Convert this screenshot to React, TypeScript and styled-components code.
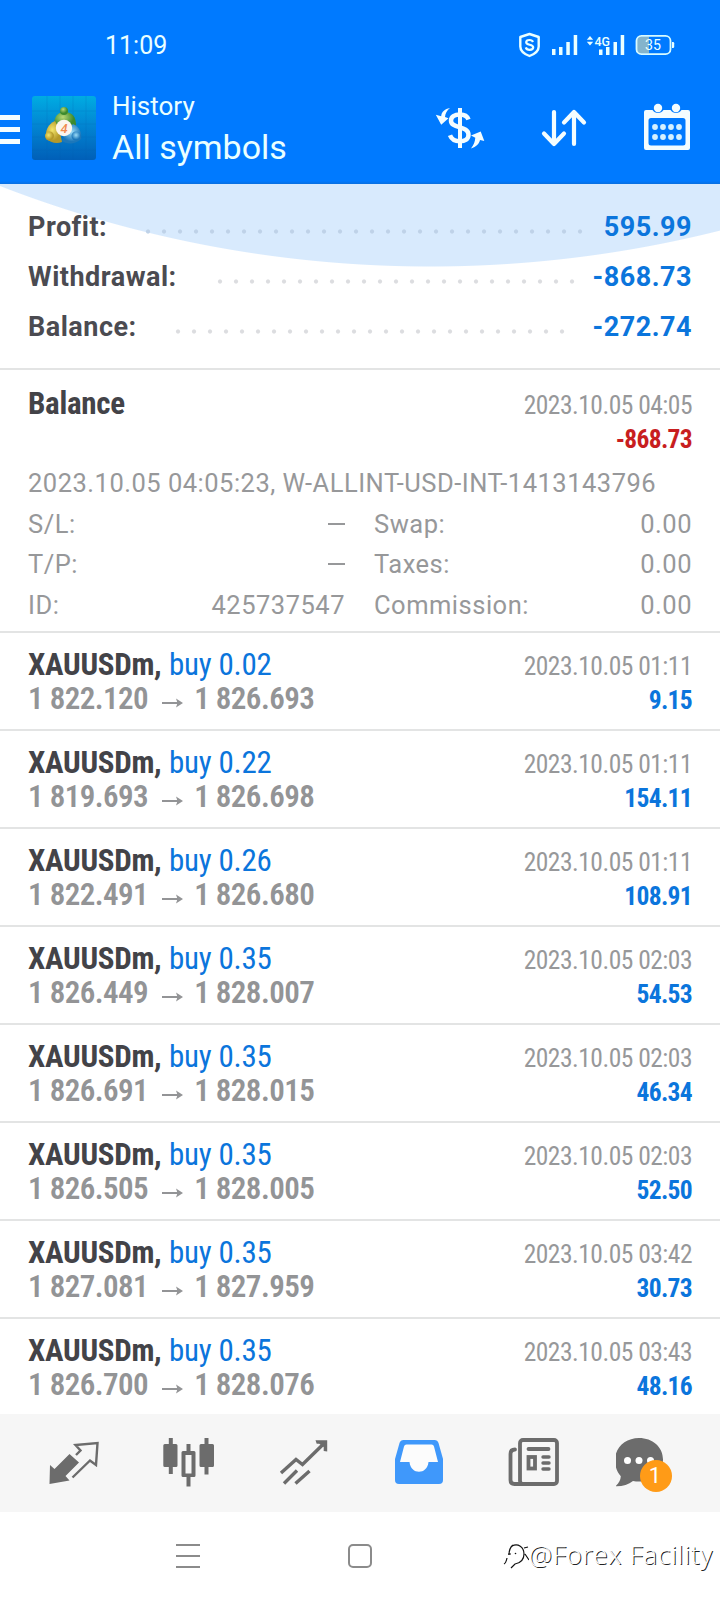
import React from "react";
import styled, { createGlobalStyle } from "styled-components";

const Global = createGlobalStyle`
  * { box-sizing: border-box; }
  body { margin: 0; background: #fff; font-family: Roboto, "Liberation Sans", sans-serif; }
  svg { display: block; flex: none; }
`;

const Screen = styled.div`
  width: 720px;
  height: 1600px;
  display: flex;
  flex-direction: column;
  overflow: hidden;
  background: #fff;
`;

const Header = styled.header`
  height: 184px;
  flex: none;
  background: linear-gradient(#007aff 0 181px, #0a6fe0 184px);
  color: #eaffff;
`;

const StatusBar = styled.div`
  height: 90px;
  display: flex;
  justify-content: space-between;
  padding: 30px 42px 0 105px;
`;

const Clock = styled.div`
  font-size: 25px;
  line-height: 32px;
`;

const TitleBar = styled.div`
  height: 90px;
  display: flex;
`;

const MenuBars = styled.div`
  width: 20px;
  height: 29px;
  margin-top: 25px;
  display: flex;
  flex-direction: column;
  justify-content: space-between;
`;

const Bar = styled.i`
  height: 5px;
  background: #f4fdff;
`;

const Logo = styled.div`
  margin: 6px 16px 0 12px;
`;

const Titles = styled.div`
  width: 300px;
`;

const Subtitle = styled.div`
  font-size: 26px;
  line-height: 30px;
  margin-top: 1px;
`;

const Title = styled.div`
  font-size: 34px;
  line-height: 40px;
  margin-top: 6px;
`;

const Actions = styled.div`
  flex: 1;
  display: flex;
  justify-content: space-between;
  padding: 12px 27px 0 22px;
`;

const Summary = styled.section`
  height: 186px;
  flex: none;
  padding: 18px 28px 0;
  border-bottom: 2px solid #e3e4e4;
  background: radial-gradient(circle at 430px -1106.5px, #d8eafd 1188.5px, #fff 1189.5px);
`;

const SummaryRow = styled.div`
  height: 50px;
  display: flex;
  align-items: center;
  font-size: 27px;
  font-weight: 700;
  letter-spacing: 0.5px;
  color: #4b4b51;
`;

const Dots = styled.span<{ $left: number; $count: number; $tint?: boolean }>`
  width: ${(p) => p.$count * 16}px;
  height: 5px;
  margin-top: 8px;
  margin-left: ${(p) => p.$left}px;
  background: radial-gradient(circle at 8px 2.5px, ${(p) => (p.$tint ? "#bfd2e8" : "#dcdde0")} 1.6px, transparent 2.6px) 0 0 / 16px 5px repeat-x;
`;

const SummaryLabel = styled.span<{ $w: number }>`
  width: ${(p) => p.$w}px;
  flex: none;
  white-space: nowrap;
`;

const SummaryValue = styled.span`
  margin-left: auto;
  color: #0b75dc;
`;

const condensed = `
  font-family: "Roboto Condensed", Roboto, sans-serif;
  font-stretch: 75%;
  white-space: nowrap;
`;

const Deal = styled.article<{ $last?: boolean }>`
  height: ${(p) => (p.$last ? 95 : 98)}px;
  flex: none;
  display: flex;
  justify-content: space-between;
  padding: 15px 28px 0;
  border-bottom: ${(p) => (p.$last ? 0 : 2)}px solid #e3e4e4;
`;

const DealLine = styled.div`
  ${condensed}
  height: 34px;
  line-height: 34px;
  font-size: 31px;
  letter-spacing: -0.2px;
  color: #0b75dc;
  display: flex;
`;

const Name = styled.b`
  font-weight: 700;
  letter-spacing: -0.3px;
  color: #434348;
  margin-right: 7.5px;
`;

const Prices = styled(DealLine)`
  font-weight: 600;
  letter-spacing: -0.55px;
  color: #939496;
  align-items: center;
`;

const Arrow = styled.svg`
  margin: 8px 11.5px 0 13.5px;
`;

const Right = styled.div`
  padding-top: 1px;
  text-align: right;
`;

const Stamp = styled.div`
  ${condensed}
  height: 34px;
  line-height: 34px;
  font-size: 25.5px;
  letter-spacing: -0.5px;
  color: #97989a;
`;

const Amount = styled(Stamp)<{ $loss?: boolean }>`
  font-weight: 700;
  letter-spacing: -0.7px;
  color: ${(p) => (p.$loss ? "#c81e1f" : "#0b75dc")};
`;

const Operation = styled.article`
  height: 263px;
  flex: none;
  padding: 17px 28px 0;
  border-bottom: 2px solid #e3e4e4;
`;

const OperationHead = styled.div`
  display: flex;
  justify-content: space-between;
  height: 75px;
`;

const Comment = styled.div`
  font-size: 25.5px;
  line-height: 42px;
  height: 42px;
  letter-spacing: 0.5px;
  color: #97989a;
  white-space: nowrap;
`;

const Details = styled.div`
  display: grid;
  grid-template-columns: 317px 318px;
  column-gap: 29px;
  grid-auto-rows: 40.4px;
`;

const Detail = styled.div`
  display: flex;
  justify-content: space-between;
  font-size: 25.5px;
  line-height: 40px;
  letter-spacing: 0.5px;
  color: #97989a;
`;

const Dash = styled.i`
  width: 17px;
  height: 2px;
  margin-top: 19px;
  background: #97989a;
`;

const Tabs = styled.nav`
  height: 98px;
  flex: none;
  display: grid;
  grid-template-columns: repeat(6, 115px);
  place-items: center;
  padding-left: 16px;
  background: #f6f6f6;
`;

const SystemBar = styled.footer`
  height: 88px;
  display: flex;
  align-items: center;
  padding: 0 7px 0 176px;
`;

const Home = styled.i`
  width: 24px;
  height: 24px;
  margin-left: 148px;
  border: 2px solid #8b8b8b;
  border-radius: 5px;
`;

const Watermark = styled.div`
  display: flex;
  margin: -4px 0 0 auto;
  align-items: center;
  font: 300 26px/30px "Open Sans", "Noto Sans", sans-serif;
  letter-spacing: 0.75px;
  color: #fff;
  text-shadow: 1px 0.5px 0 #222;
  white-space: nowrap;
`;

const deals = [
  ["0.02", "1 822.120", "1 826.693", "01:11", "9.15"],
  ["0.22", "1 819.693", "1 826.698", "01:11", "154.11"],
  ["0.26", "1 822.491", "1 826.680", "01:11", "108.91"],
  ["0.35", "1 826.449", "1 828.007", "02:03", "54.53"],
  ["0.35", "1 826.691", "1 828.015", "02:03", "46.34"],
  ["0.35", "1 826.505", "1 828.005", "02:03", "52.50"],
  ["0.35", "1 827.081", "1 827.959", "03:42", "30.73"],
  ["0.35", "1 826.700", "1 828.076", "03:43", "48.16"],
];

const StatusIcons = () => (
  <svg width="160" height="30" viewBox="518 30 160 30" fill="#eaffff">
    <path d="M529.500 34l9.200 3v9.500c0 4.500-4 7.500-9.200 9.500-5.200-2-9.200-5-9.200-9.500V37z" fill="none" stroke="#eaffff" strokeWidth="2.400" strokeLinejoin="round" />
    <path d="M533 42c-.6-1.600-2-2-3.500-2-2 0-3.300.8-3.300 2.300 0 3.400 7 1.600 7 5 0 1.600-1.600 2.500-3.600 2.500-1.900 0-3.300-.7-3.800-2.400" fill="none" stroke="#eaffff" strokeWidth="2.200" />
    <path d="M552 49h3.500v6H552zM559 47h3.500v8H559zM566.300 42h3.500v13h-3.500zM573.700 35h3.500v20h-3.500z" />
    <path d="M599 49.500h3.500V55H599zM606 47h3.500v8H606zM613.500 42h3.500v13h-3.500zM620.700 35h3.500v20h-3.500z" />
    <path d="M590 36l3.200 3.700h-6.400zM590 45.500l3.200-3.700h-6.400z" />
    <text x="594.500" y="45.500" fontSize="12.500" fontWeight="500" textLength="15.500" lengthAdjust="spacingAndGlyphs">4G</text>
    <path d="M641 36.500h8v17h-8a4 4 0 0 1-4-4v-9a4 4 0 0 1 4-4z" fill="#84b4cc" />
    <rect x="636.500" y="35.800" width="34" height="18.400" rx="5" fill="none" stroke="#d8fbff" strokeWidth="1.800" />
    <path d="M672 42h1a1.200 1.200 0 0 1 1.200 1.200v3.600A1.200 1.200 0 0 1 673 48h-1z" />
    <text x="645" y="50" fontSize="14.500" textLength="16" lengthAdjust="spacingAndGlyphs">35</text>
  </svg>
);

const AppLogo = () => (
  <svg width="64" height="64" viewBox="0 0 64 64">
    <defs>
      <linearGradient id="sky" x1="0" y1="0" x2="0" y2="1">
        <stop offset="0" stopColor="#00ace2" />
        <stop offset="0.450" stopColor="#0286d2" />
        <stop offset="1" stopColor="#005fb8" />
      </linearGradient>
      <radialGradient id="green" cx=".4" cy=".3"><stop offset="0" stopColor="#b9d977" /><stop offset="1" stopColor="#3c8a2d" /></radialGradient>
      <radialGradient id="gold" cx=".4" cy=".4"><stop offset="0" stopColor="#f3e56b" /><stop offset="1" stopColor="#b4992a" /></radialGradient>
      <radialGradient id="blue" cx=".5" cy=".4"><stop offset="0" stopColor="#9bdcf8" /><stop offset="1" stopColor="#1c77ba" /></radialGradient>
    </defs>
    <rect width="64" height="64" rx="3" fill="url(#sky)" />
    <path d="M0 15h64M0 28h64M0 41h64M0 54h64M15 0v64M28 0v64M41 0v64M54 0v64" stroke="#0a5fae" strokeWidth=".6" opacity=".3" />
    <path d="M22 29c0-9 4-13 11-13s11 5 11 13l-3 4H24z" fill="url(#green)" />
    <circle cx="32" cy="15" r="4" fill="url(#green)" />
    <path d="M23 25c-7 3-10 10-9 17 4 5 11 6 16 4l-3-14z" fill="url(#gold)" />
    <circle cx="17.500" cy="40" r="4.500" fill="url(#gold)" />
    <path d="M41 28c7 3 9 9 8 15-5 5-13 6-19 2l5-10z" fill="url(#blue)" />
    <circle cx="44" cy="40" r="4.500" fill="url(#blue)" />
    <circle cx="32" cy="32" r="8.200" fill="#fbf6ee" />
    <text x="32" y="36.800" fontSize="13" fontWeight="500" fontStyle="italic" textAnchor="middle" fill="#f08a50">4</text>
  </svg>
);

const Currency = () => (
  <svg width="52" height="52" viewBox="434 102 52 52" fill="none" stroke="#f4fdff" strokeWidth="4">
    <path d="M460 108v40" />
    <path d="M468.500 119.500c-1.200-3.300-4-5-8.500-5-5.500 0-9 2.300-9 6.200 0 8.300 17.500 4.500 17.500 14 0 4.300-3.600 6.600-8.500 6.600-5.300 0-8.600-2.300-10-6" strokeWidth="4.500" />
    <path d="M450 108c-5.500 1-8.500 4-8.800 8.200l-5.400-1.400 5.400 10 7.300-6.500-3.500-1.200c.3-3.600 1.700-6.400 5-9.100zM471 148.500c5.500-2 8-4.600 9-8.500l4.300 1-3.600-9.500-9.700 4 4.300 2.300c-.3 4-1.500 7-4.300 10.700z" fill="#f4fdff" stroke="none" />
  </svg>
);

const Sort = () => (
  <svg width="52" height="52" viewBox="538 102 52 52" fill="none" stroke="#f4fdff" strokeWidth="4.200" strokeLinecap="round" strokeLinejoin="round">
    <path d="M554 112v32M544 133.500l10 10.500 10-10.500M574 144v-32M564 122.500l10-10.500 10 10.500" />
  </svg>
);

const CalendarIcon = () => (
  <svg width="52" height="52" viewBox="641 102 52 52" fill="#f4fdff">
    <path fillRule="evenodd" d="M646 110h6.500a6.500 6.500 0 0 0 11 0h7a6.500 6.500 0 0 0 11 0h6.500a2 2 0 0 1 2 2v36a2 2 0 0 1-2 2h-42a2 2 0 0 1-2-2v-36a2 2 0 0 1 2-2zM651 118a2.500 2.500 0 0 0-2.500 2.500v22.500a2.500 2.500 0 0 0 2.500 2.500h32a2.500 2.500 0 0 0 2.500-2.500v-22.500a2.500 2.500 0 0 0-2.500-2.500z" />
    <circle cx="658" cy="108" r="4.200" />
    <circle cx="676" cy="108" r="4.200" />
    {[127, 137].map((y) => [655, 663, 671, 679].map((x) => <circle key={`${x}${y}`} cx={x} cy={y} r="2.900" fill="#d5f1ff" />))}
  </svg>
);

const TradeIcon = () => (
  <svg width="60" height="60" viewBox="43.500 1433 60 60" fill="#6c6c6c">
    <path d="M69 1454l9.500 8.500-13.500 13.500 4 4.500-20 3.500.500-19 4.500 4z" />
    <path d="M75.500 1455l4.500-4.500-5-5.500 22-2-1.500 22-6-4.500-17.500 17" fill="none" stroke="#6c6c6c" strokeWidth="2.400" />
  </svg>
);

const CandlesIcon = () => (
  <svg width="60" height="60" viewBox="159 1433 60 60" fill="#6c6c6c">
    <path d="M168.800 1438h4v6h3.200a1.500 1.500 0 0 1 1.500 1.500v20a1.500 1.500 0 0 1-1.500 1.500h-3.200v7h-4v-7h-4a1.500 1.500 0 0 1-1.500-1.500v-20a1.500 1.500 0 0 1 1.500-1.500h4zM204.500 1438h4v6h4a1.500 1.500 0 0 1 1.500 1.500v20a1.500 1.500 0 0 1-1.500 1.500h-4v7.500h-4v-7.500h-3.500a1.500 1.500 0 0 1-1.500-1.500v-20a1.500 1.500 0 0 1 1.500-1.500h3.500z" />
    <path fillRule="evenodd" d="M186.500 1444h4v7h3.500a1.500 1.500 0 0 1 1.500 1.500v23a1.500 1.500 0 0 1-1.500 1.500h-3.500v9.500h-4v-9.500H183a1.500 1.500 0 0 1-1.500-1.500v-23a1.500 1.500 0 0 1 1.500-1.500h3.500zm-1 11v18.500h6V1455z" />
  </svg>
);

const TrendIcon = () => (
  <svg width="60" height="60" viewBox="273.500 1433 60 60" fill="none" stroke="#6c6c6c" strokeWidth="3.400">
    <path d="M280.500 1473l15-13.500 6.500 5 22-21.500M283.500 1483.500l13-13M295 1483.500l14-12.500" />
    <path d="M315 1440.300h11.700v11.200l-3.500-.5v-4l-4.500-3.200h-2.500z" fill="#6c6c6c" stroke="none" />
  </svg>
);

const InboxIcon = () => (
  <svg width="60" height="60" viewBox="388.500 1433 60 60">
    <path d="M403 1440h31q3 0 4 3l4.500 16v21q0 4-4 4h-40q-4 0-4-4v-21l4.500-16q1-3 4-3z" fill="#3f98fb" />
    <path d="M406 1444.500q-2 0-2.500 2l-4 15.500h9.500c1.200 13 17.800 13 19 0h9.500l-4-15.500q-.5-2-2.500-2z" fill="#fcfcfc" />
  </svg>
);

const NewsIcon = () => (
  <svg width="60" height="60" viewBox="504 1433 60 60" fill="none" stroke="#6c6c6c" strokeWidth="3.800">
    <rect x="520" y="1440" width="37" height="44" rx="3" />
    <path d="M515 1449.500q-4.500 0-4.500 4.500v26q0 4 4 4h8M528.500 1449h20" strokeLinecap="round" />
    <rect x="528.500" y="1457" width="6.500" height="11.500" />
    <path d="M543 1457h6M543 1463h6M543 1469h6" strokeWidth="3.400" strokeLinecap="round" />
  </svg>
);

const ChatIcon = () => (
  <svg width="66" height="60" viewBox="616 1433 66 60">
    <path d="M639 1438c13.500 0 24 9 24 21.500s-10.500 22-24 22c-2 0-4-.2-6-.6-4.500 3.600-10.500 5.600-17.500 5.400 3.500-3.300 5-6 5.300-10-3.700-4-5.800-9.500-5.800-16.300 0-12.500 10.500-22 24-22z" fill="#6c6c6c" />
    <circle cx="627.500" cy="1460.500" r="3.500" fill="#fff" />
    <circle cx="639" cy="1460.500" r="3.500" fill="#fff" />
    <circle cx="650.500" cy="1460.500" r="3.500" fill="#fff" />
    <circle cx="656" cy="1476" r="16" fill="#ff9b17" />
    <text x="655" y="1483" fontSize="22" textAnchor="middle" fill="#fff">1</text>
  </svg>
);

const WatermarkLogo = () => (
  <svg width="26" height="30" viewBox="503 1541 26 30" fill="none" stroke="#111" strokeWidth="1.200">
    <path d="M513 1547q-4 3-4 10M508 1556h3M507 1560q-1 5-3 6" />
    <path d="M512 1548c6-3 12 1 12 8 0 6-4 9-9 10l-4 4M524 1550l4-1M525 1556l4 6" />
    <circle cx="515.500" cy="1555.500" r=".8" fill="#111" stroke="none" />
  </svg>
);

export default function App() {
  return (
    <Screen>
      <Global />
      <Header>
        <StatusBar>
          <Clock>11:09</Clock>
          <StatusIcons />
        </StatusBar>
        <TitleBar>
          <MenuBars><Bar /><Bar /><Bar /></MenuBars>
          <Logo><AppLogo /></Logo>
          <Titles>
            <Subtitle>History</Subtitle>
            <Title>All symbols</Title>
          </Titles>
          <Actions><Currency /><Sort /><CalendarIcon /></Actions>
        </TitleBar>
      </Header>
      <Summary>
        <SummaryRow>
          <SummaryLabel $w={79}>Profit:</SummaryLabel>
          <Dots $left={33} $count={28} $tint />
          <SummaryValue>595.99</SummaryValue>
        </SummaryRow>
        <SummaryRow>
          <SummaryLabel $w={150}>Withdrawal:</SummaryLabel>
          <Dots $left={33.5} $count={23} />
          <SummaryValue>-868.73</SummaryValue>
        </SummaryRow>
        <SummaryRow>
          <SummaryLabel $w={109}>Balance:</SummaryLabel>
          <Dots $left={33} $count={25} />
          <SummaryValue>-272.74</SummaryValue>
        </SummaryRow>
      </Summary>
      <Operation>
        <OperationHead>
          <DealLine><Name>Balance</Name></DealLine>
          <Right>
            <Stamp>2023.10.05 04:05</Stamp>
            <Amount $loss>-868.73</Amount>
          </Right>
        </OperationHead>
        <Comment>2023.10.05 04:05:23, W-ALLINT-USD-INT-1413143796</Comment>
        <Details>
          <Detail><span>S/L:</span><Dash /></Detail>
          <Detail><span>Swap:</span><span>0.00</span></Detail>
          <Detail><span>T/P:</span><Dash /></Detail>
          <Detail><span>Taxes:</span><span>0.00</span></Detail>
          <Detail><span>ID:</span><span>425737547</span></Detail>
          <Detail><span>Commission:</span><span>0.00</span></Detail>
        </Details>
      </Operation>
      {deals.map(([lots, open, close, time, profit], i) => (
        <Deal key={i} $last={i === deals.length - 1}>
          <div>
            <DealLine><Name>XAUUSDm,</Name>buy {lots}</DealLine>
            <Prices>
              <span>{open}</span>
              <Arrow width="21" height="10" viewBox="0 0 21 10" fill="none" stroke="#939496" strokeWidth="2">
                <path d="M0 5h18" />
                <path d="M14 .5l7 4.500-7 4.500 1.500-4.500z" fill="#939496" stroke="none" />
              </Arrow>
              <span>{close}</span>
            </Prices>
          </div>
          <Right>
            <Stamp>2023.10.05 {time}</Stamp>
            <Amount>{profit}</Amount>
          </Right>
        </Deal>
      ))}
      <Tabs>
        <TradeIcon />
        <CandlesIcon />
        <TrendIcon />
        <InboxIcon />
        <NewsIcon />
        <ChatIcon />
      </Tabs>
      <SystemBar>
        <svg width="24" height="26" viewBox="0 0 24 26" stroke="#8b8b8b" strokeWidth="2">
          <path d="M0 2h24M0 13h24M0 24h24" />
        </svg>
        <Home />
        <Watermark><WatermarkLogo />@Forex Facility</Watermark>
      </SystemBar>
    </Screen>
  );
}
